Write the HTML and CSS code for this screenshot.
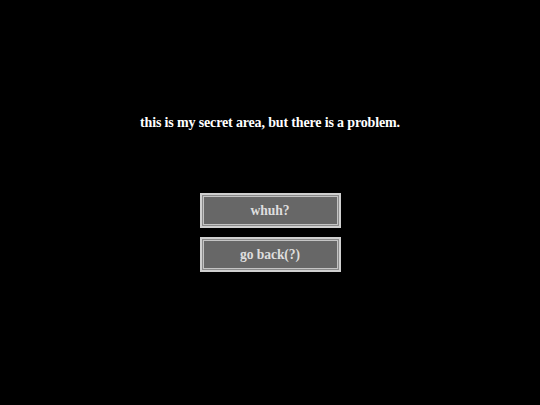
FILE: index.html
```html
<!DOCTYPE html>
<html>
<head>
<meta charset="utf-8">
<link rel="stylesheet" href="styles.css">
</head>
<body>
<main class="page">
  <p class="message">this is my secret area, but there is a problem.</p>
  <div class="actions">
    <button class="btn">whuh?</button>
    <button class="btn">go back(?)</button>
  </div>
</main>
</body>
</html>
```
FILE: styles.css
```css
html, body {
  margin: 0;
  padding: 0;
  background: #000;
}

.page {
  width: 540px;
  height: 405px;
  display: flex;
  flex-direction: column;
  align-items: center;
  font-family: "Liberation Serif", "Times New Roman", serif;
  font-weight: bold;
}

.message {
  margin: 115px 0 0;
  color: #fff;
  font-size: 14px;
  line-height: 16px;
  letter-spacing: -0.15px;
}

.actions {
  margin-top: 62px;
  display: flex;
  flex-direction: column;
  gap: 9px;
}

.btn {
  box-sizing: border-box;
  width: 141px;
  height: 35px;
  padding: 0;
  background: #676767;
  color: #dedede;
  font: inherit;
  font-size: 13.6px;
  letter-spacing: -0.1px;
  border: 2px solid #cfcfcf;
  box-shadow: inset 0 0 0 1px #8a8a8a, inset 0 0 0 2px #c4c4c4;
}
```
